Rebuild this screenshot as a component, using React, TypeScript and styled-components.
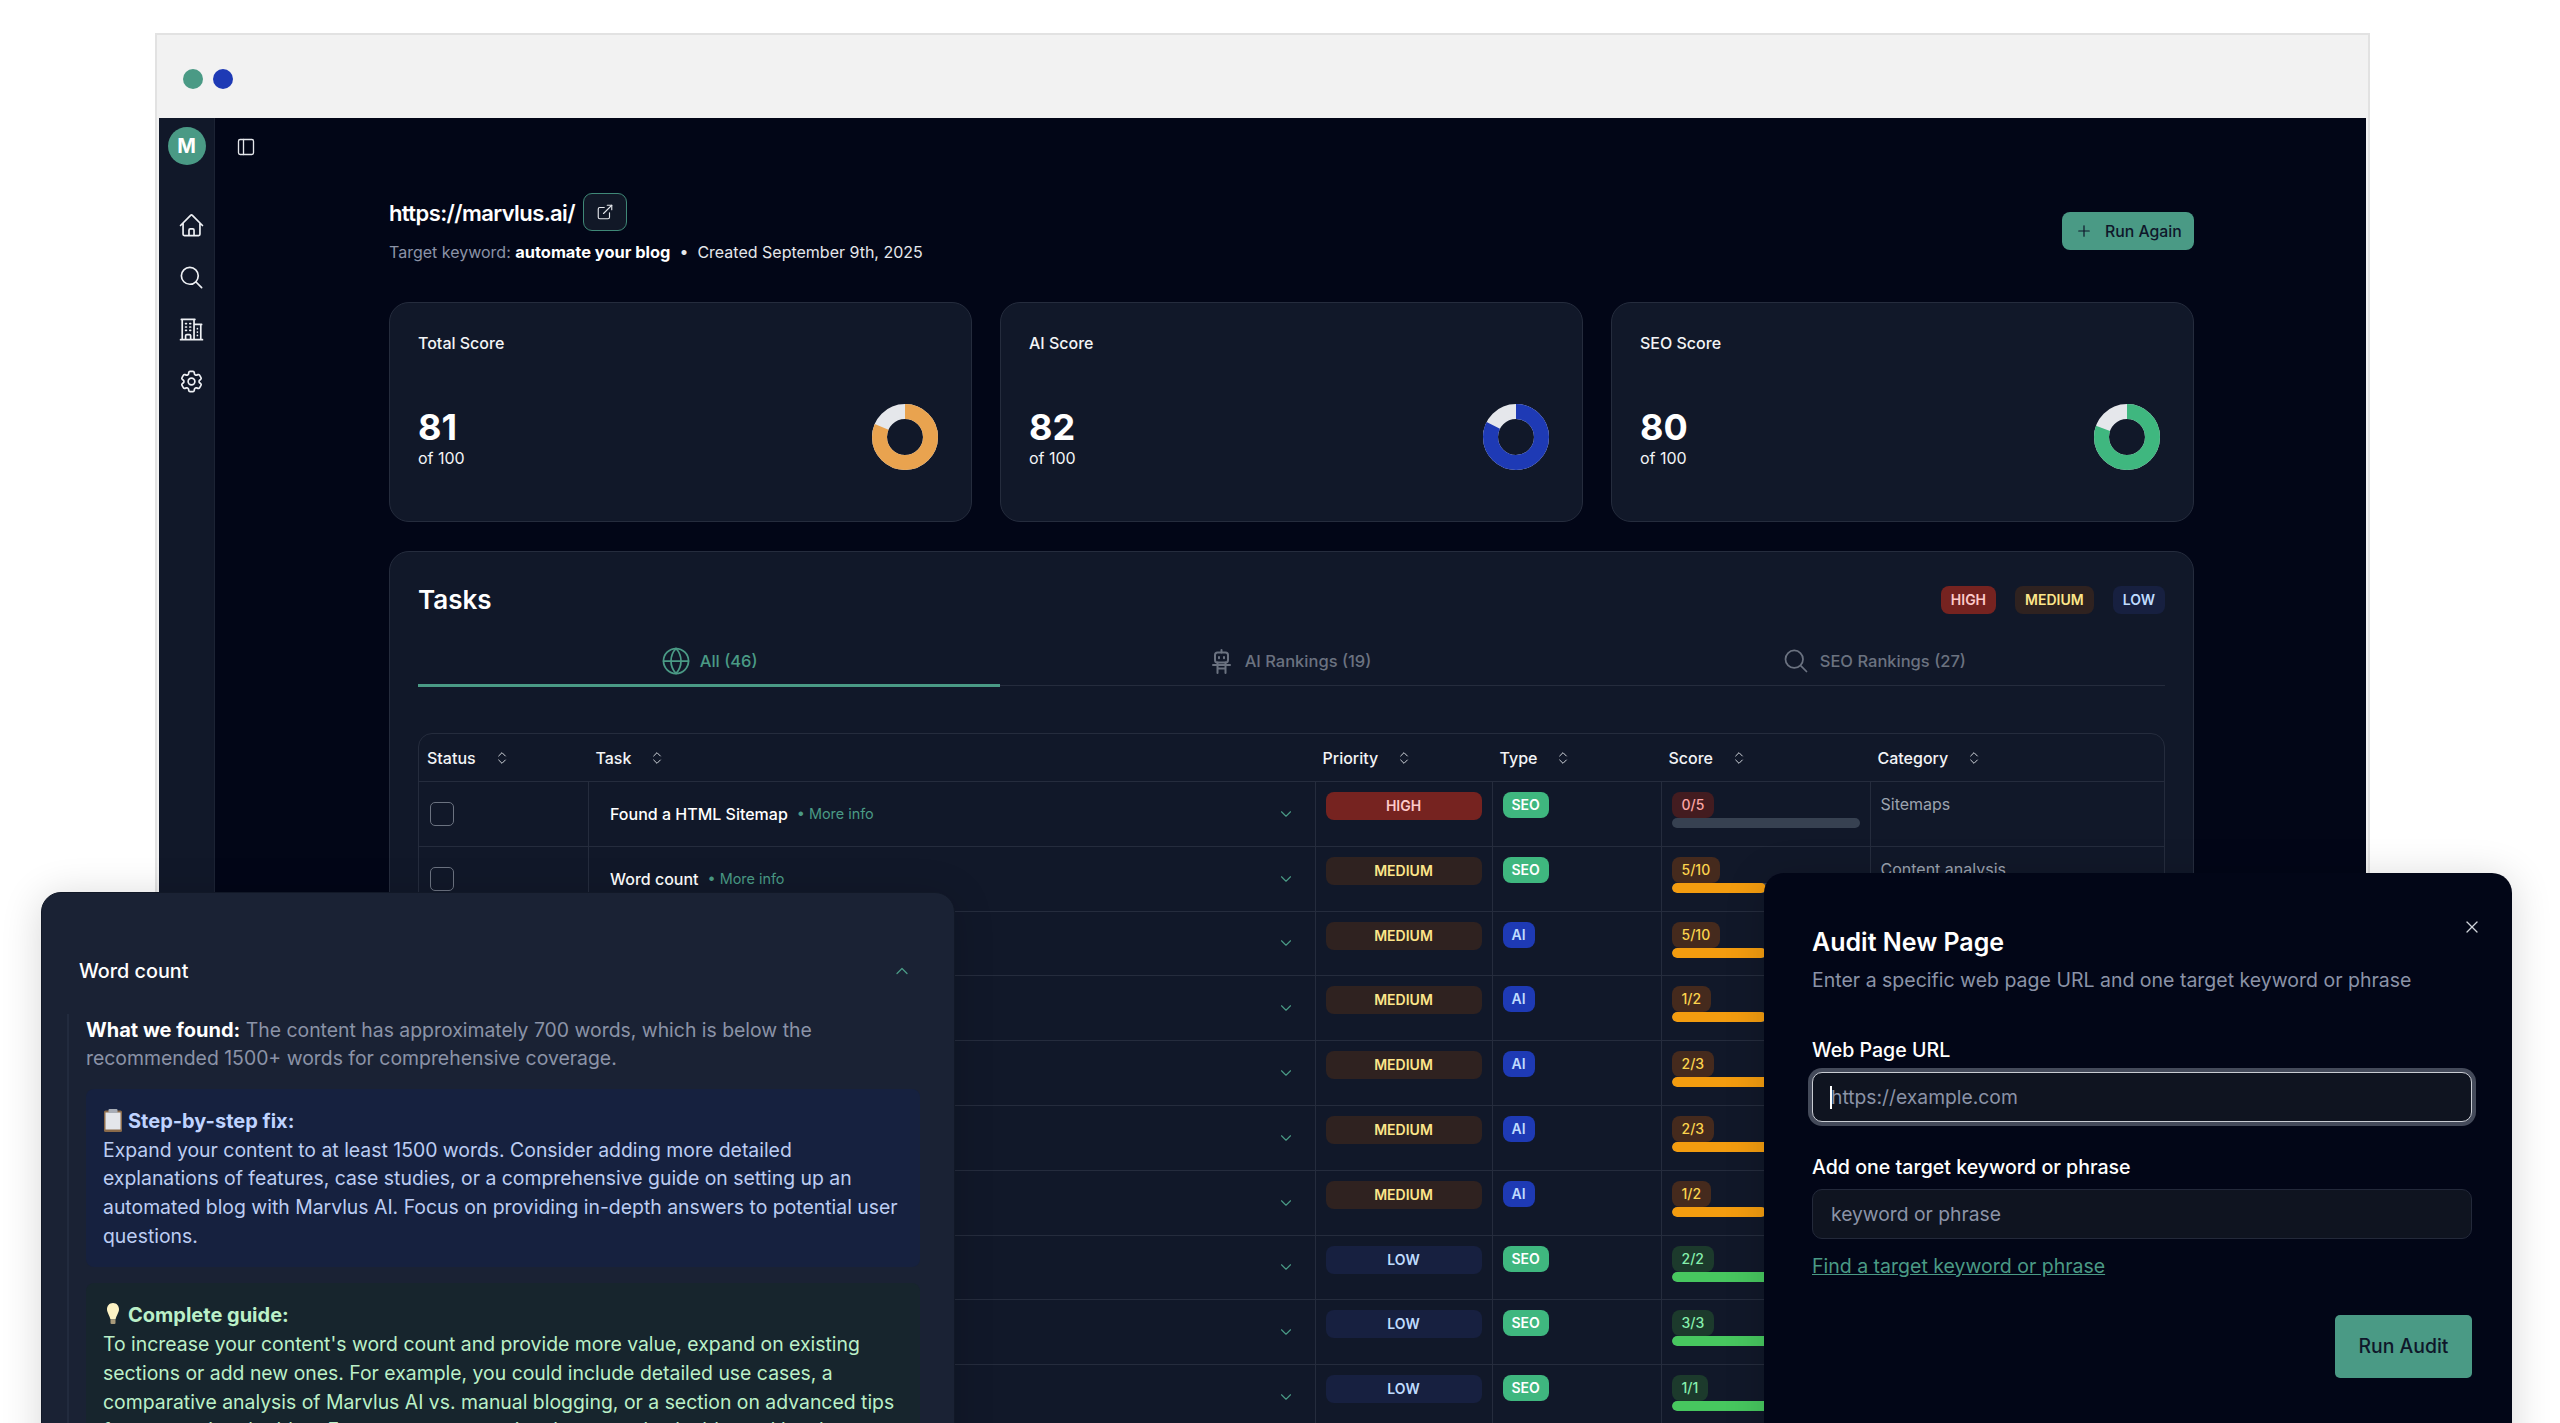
import React from "react";
import styled, { createGlobalStyle } from "styled-components";
import {
  PanelLeft,
  ExternalLink,
  Plus,
  Globe,
  ChevronsUpDown,
  ChevronDown,
  ChevronUp,
  X,
} from "lucide-react";
import {
  HiOutlineBuildingOffice2,
  HiOutlineHome,
  HiOutlineMagnifyingGlass,
  HiOutlineCog6Tooth,
} from "react-icons/hi2";

const LINE = "#252c3d";

const GlobalStyle = createGlobalStyle`
  html, body { margin: 0; padding: 0; background: #fff; }
  * { box-sizing: border-box; }
  body { font-family: Inter, "Noto Sans", sans-serif; }
`;

const Page = styled.div`
  position: relative;
  width: 2560px;
  height: 1423px;
  overflow: hidden;
  padding: 33px 190px 0 155px;
  background: #fff;
`;
const Frame = styled.div`
  display: flex;
  flex-direction: column;
  height: 100%;
  border: 2px solid #e2e2e2;
  border-bottom: 0;
  padding: 0 2px;
  background: #f2f2f2;
`;
const TitleBar = styled.div`
  display: flex;
  align-items: center;
  gap: 10.5px;
  height: 83px;
  padding: 4px 0 0 23.5px;
  flex: none;
`;
const Dot = styled.span<{ $color: string }>`
  width: 20px;
  height: 20px;
  border-radius: 50%;
  background: ${(p) => p.$color};
`;
const AppShell = styled.div`
  flex: 1;
  display: flex;
  min-height: 0;
  background: #020617;
  overflow: hidden;
`;
const Sidebar = styled.aside`
  flex: none;
  width: 56px;
  padding-top: 9px;
  display: flex;
  flex-direction: column;
  align-items: center;
  background: #111829;
  border-right: 1px solid #1c2334;
`;
const Avatar = styled.div`
  width: 38px;
  height: 38px;
  border-radius: 50%;
  background: #4a9a85;
  color: #fff;
  font-size: 20px;
  font-weight: 700;
  line-height: 39px;
  text-align: center;
`;
const SideNav = styled.nav`
  display: flex;
  flex-direction: column;
  gap: 25px;
  margin: 47px 0 0 10px;
  color: #eef0f4;
  & > svg {
    width: 27px;
    height: 27px;
    display: block;
  }
`;
const Main = styled.main`
  flex: 1;
  min-width: 0;
  display: flex;
  flex-direction: column;
`;
const TopBar = styled.div`
  flex: none;
  height: 75px;
  padding: 19px 0 0 21px;
  color: #e5e7eb;
`;
const Content = styled.div`
  flex: 1;
  min-height: 0;
  padding: 0 172px 0 174px;
`;
const Header = styled.header`
  display: flex;
  justify-content: space-between;
  align-items: center;
  height: 76px;
  margin-bottom: 33px;
`;
const HeaderLeft = styled.div`
  align-self: flex-start;
`;
const TitleRow = styled.div`
  display: flex;
  align-items: center;
  gap: 8px;
  height: 38px;
`;
const UrlTitle = styled.h1`
  margin: 0;
  padding-top: 2px;
  color: #fff;
  font-size: 22px;
  font-weight: 600;
  letter-spacing: -0.6px;
  line-height: 38px;
`;
const IconButton = styled.button`
  width: 44px;
  height: 38px;
  padding: 0;
  display: flex;
  align-items: center;
  justify-content: center;
  border: 1.5px solid #3f8877;
  border-radius: 9px;
  background: #111827;
  color: #e5e7eb;
`;
const Meta = styled.p`
  margin: 9px 0 0;
  font-size: 16px;
  line-height: 24px;
  color: #8b93a7;
  display: flex;
  align-items: center;
  white-space: pre;
  b {
    color: #fff;
    font-size: 16.4px;
    font-weight: 700;
  }
  span {
    color: #e5e7eb;
  }
`;
const RunAgain = styled.button`
  display: flex;
  align-items: center;
  gap: 12px;
  width: 132px;
  height: 38px;
  padding: 0 0 0 13px;
  border: 0;
  border-radius: 8px;
  background: #4a9a85;
  color: #0f172a;
  font-family: inherit;
  font-size: 15.8px;
  font-weight: 500;
  white-space: nowrap;
`;
const ScoreGrid = styled.section`
  display: grid;
  grid-template-columns: repeat(3, 1fr);
  gap: 28px;
  margin-bottom: 29px;
`;
const ScoreCard = styled.article`
  height: 220px;
  padding: 30px 33px 0 28px;
  background: #111829;
  border: 1.5px solid ${LINE};
  border-radius: 20px;
`;
const ScoreLabel = styled.div`
  color: #f3f4f6;
  font-size: 16px;
  font-weight: 500;
  line-height: 20px;
`;
const ScoreBody = styled.div`
  margin-top: 51px;
  display: flex;
  justify-content: space-between;
  align-items: center;
`;
const ScoreValue = styled.div`
  margin-top: 2px;
  color: #fff;
  font-size: 36px;
  font-weight: 700;
  line-height: 40px;
`;
const ScoreOf = styled.div`
  color: #f3f4f6;
  font-size: 16px;
  line-height: 22px;
`;
const TasksCard = styled.section`
  padding: 31px 28px 0;
  height: 1000px;
  background: #111829;
  border: 1.5px solid ${LINE};
  border-radius: 20px;
`;
const TasksHead = styled.div`
  display: flex;
  justify-content: space-between;
  align-items: center;
  height: 34px;
`;
const TasksTitle = styled.h2`
  margin: 0;
  color: #fff;
  font-size: 26px;
  font-weight: 600;
  line-height: 34px;
`;
const Legend = styled.div`
  display: flex;
  gap: 19px;
`;
const LegendChip = styled.span<{ $bg: string; $fg: string }>`
  height: 28px;
  padding: 0 10px;
  border-radius: 8px;
  background: ${(p) => p.$bg};
  color: ${(p) => p.$fg};
  font-size: 14px;
  font-weight: 600;
  line-height: 28px;
`;
const Tabs = styled.div`
  display: grid;
  grid-template-columns: repeat(3, 1fr);
  margin-top: 21.5px;
  border-bottom: 1.5px solid ${LINE};
`;
const Tab = styled.div<{ $active?: boolean; $gap: number }>`
  display: flex;
  align-items: center;
  justify-content: center;
  gap: ${(p) => p.$gap}px;
  height: 48px;
  margin-bottom: -1.5px;
  border-bottom: 3px solid ${(p) => (p.$active ? "#4a9a85" : "transparent")};
  color: ${(p) => (p.$active ? "#4a9a85" : "#6b7280")};
  font-size: 16.5px;
  font-weight: 500;
`;
const Table = styled.div`
  margin-top: 47px;
  border: 1.5px solid ${LINE};
  border-radius: 14px 14px 0 0;
`;
const COLS = "168.5px 727px 177px 169px 209px 1fr";
const HeadRow = styled.div`
  display: grid;
  grid-template-columns: ${COLS};
  height: 47px;
`;
const HeadCell = styled.div`
  display: flex;
  align-items: center;
  gap: 18px;
  padding-left: 8px;
  color: #f3f4f6;
  font-size: 16px;
  font-weight: 500;
  svg {
    color: #d1d5db;
  }
`;
const Row = styled.div`
  display: grid;
  grid-template-columns: ${COLS};
  height: 64.8px;
  border-top: 1.5px solid ${LINE};
`;
const Cell = styled.div`
  min-width: 0;
  padding: 10px 10px 0;
  border-left: 1.5px solid ${LINE};
  &:first-child {
    border-left: 0;
  }
`;
const StatusCell = styled(Cell)`
  display: flex;
  align-items: center;
  padding: 0 0 0 11px;
`;
const Box = styled.span`
  width: 24px;
  height: 24px;
  border: 1.5px solid #6b7280;
  border-radius: 5px;
`;
const TaskCell = styled(Cell)`
  display: flex;
  align-items: center;
  padding: 0 20px 0 21.5px;
  color: #fff;
  font-size: 16px;
  font-weight: 500;
`;
const MoreInfo = styled.span`
  margin-left: 9px;
  color: #4a9a85;
  font-size: 14.4px;
  font-weight: 400;
`;
const RowChevron = styled(ChevronDown)`
  margin-left: auto;
  color: #4a9a85;
`;
const PriorityPill = styled.div<{ $bg: string; $fg: string }>`
  height: 28px;
  border-radius: 8px;
  background: ${(p) => p.$bg};
  color: ${(p) => p.$fg};
  font-size: 14px;
  font-weight: 600;
  line-height: 28px;
  text-align: center;
`;
const TypeBadge = styled.span<{ $bg: string; $fg: string }>`
  display: inline-block;
  height: 26px;
  padding: 0 9px;
  border-radius: 8px;
  background: ${(p) => p.$bg};
  color: ${(p) => p.$fg};
  font-size: 14px;
  font-weight: 600;
  line-height: 26px;
`;
const ScoreBadge = styled.span<{ $bg: string; $fg: string }>`
  display: block;
  width: fit-content;
  height: 26px;
  padding: 0 10px;
  border-radius: 8px;
  background: ${(p) => p.$bg};
  color: ${(p) => p.$fg};
  font-size: 14px;
  font-weight: 500;
  line-height: 26px;
`;
const Track = styled.div`
  height: 10px;
  border-radius: 5px;
  background: #374151;
  overflow: hidden;
`;
const Fill = styled.div<{ $color: string }>`
  height: 100%;
  border-radius: 5px;
  background: ${(p) => p.$color};
`;
const Category = styled.div`
  color: #9ca3af;
  font-size: 16px;
  line-height: 24px;
`;

const DetailPanel = styled.aside`
  position: absolute;
  left: 41px;
  top: 891.5px;
  width: 914px;
  height: 600px;
  background: #1a2234;
  border: 1px solid #111827;
  border-radius: 20px;
  box-shadow: 0 4px 40px rgba(0, 0, 0, 0.16);
`;
const DetailHead = styled.div`
  display: flex;
  justify-content: space-between;
  align-items: center;
  padding: 66px 42px 0 37px;
  color: #fff;
  font-size: 19.8px;
  font-weight: 500;
  line-height: 24px;
  svg {
    color: #4a9a85;
  }
`;
const DetailBody = styled.div`
  margin: 31px 34px 0 25px;
  padding: 2px 0 0 17px;
  border-left: 2px solid #222b3e;
`;
const Found = styled.p`
  margin: 0;
  color: #8b93a7;
  font-size: 19.4px;
  line-height: 28.7px;
  b {
    color: #fff;
    font-size: 20px;
    font-weight: 700;
  }
`;
const Note = styled.div<{ $bg: string; $fg: string; $head: string }>`
  margin-top: 16px;
  padding: 18px 10px 17px 17px;
  border-radius: 8px;
  background: ${(p) => p.$bg};
  color: ${(p) => p.$fg};
  font-size: 19.4px;
  line-height: 28.7px;
  b {
    color: ${(p) => p.$head};
    font-size: 20px;
    font-weight: 700;
  }
  svg {
    vertical-align: -4px;
    margin-right: 5px;
  }
`;
const Modal = styled.aside`
  position: absolute;
  left: 1764px;
  top: 872.5px;
  width: 748px;
  height: 620px;
  padding: 53px 40px 0 48px;
  display: flex;
  flex-direction: column;
  background: #020617;
  border-radius: 20px;
  box-shadow: 0 4px 40px rgba(0, 0, 0, 0.16);
`;
const CloseButton = styled.button`
  position: absolute;
  top: 44px;
  right: 30px;
  padding: 0;
  border: 0;
  background: none;
  color: #d1d5db;
  display: flex;
`;
const ModalTitle = styled.h2`
  margin: 0;
  color: #fff;
  font-size: 25px;
  font-weight: 600;
  line-height: 32px;
`;
const ModalSub = styled.p`
  margin: 8px 0 0;
  color: #8b93a7;
  font-size: 19.5px;
  line-height: 28px;
`;
const FieldLabel = styled.label<{ $top: number }>`
  margin-top: ${(p) => p.$top}px;
  color: #fff;
  font-size: 19.6px;
  font-weight: 500;
  line-height: 24px;
`;
const InputWrap = styled.div`
  position: relative;
  margin-top: 10px;
`;
const TextInput = styled.input<{ $focus?: boolean }>`
  display: block;
  width: 100%;
  height: 50px;
  padding: 0 18px;
  border-radius: 10px;
  background: #0f1420;
  font-family: inherit;
  font-size: 19.3px;
  color: #fff;
  border: ${(p) => (p.$focus ? "1.5px solid #c9ccd3" : "1.5px solid #23293a")};
  box-shadow: ${(p) => (p.$focus ? "0 0 0 4px #444a5a" : "none")};
  outline: none;
  &::placeholder {
    color: #8b93a7;
    opacity: 1;
  }
`;
const Caret = styled.span`
  position: absolute;
  left: 18px;
  top: 14px;
  width: 1.5px;
  height: 23px;
  background: #fff;
`;
const KeywordLink = styled.a`
  margin-top: 15px;
  color: #4a9a85;
  font-size: 19.5px;
  line-height: 24px;
  text-decoration: underline;
`;
const RunAudit = styled.button`
  align-self: flex-end;
  margin-top: 37px;
  width: 137px;
  height: 63px;
  border: 0;
  border-radius: 5px;
  background: #4a9a85;
  color: #0f172a;
  font-family: inherit;
  font-size: 19.4px;
  font-weight: 500;
`;

const DonutSvg = styled.svg`
  display: block;
  flex: none;
`;

function Donut({ value, color }: { value: number; color: string }) {
  const r = 25.5;
  const c = 2 * Math.PI * r;
  return (
    <DonutSvg width="66" height="66" viewBox="0 0 66 66">
      <circle cx="33" cy="33" r={r} fill="none" stroke="#e5e7eb" strokeWidth="15" />
      <circle
        cx="33"
        cy="33"
        r={r}
        fill="none"
        stroke={color}
        strokeWidth="15"
        strokeDasharray={`${(c * value) / 100} ${c}`}
        transform="rotate(-90 33 33)"
      />
    </DonutSvg>
  );
}

function RobotIcon() {
  return (
    <svg width="19" height="25" viewBox="0 0 19 25" fill="none" stroke="currentColor" strokeWidth="2" strokeLinecap="round" strokeLinejoin="round">
      <path d="M9.500 1v2.500" />
      <rect x="3" y="3.500" width="13" height="10" rx="2.500" />
      <path d="M7 8v1.200M12 8v1.200" />
      <path d="M1 16h17" />
      <path d="M5.500 13.500V24M13.500 13.500V24M5.500 19.500h8" />
    </svg>
  );
}

function ClipboardIcon() {
  return (
    <svg width="20" height="23" viewBox="0 0 20 23">
      <rect x="1" y="1.500" width="18" height="21.500" rx="1.500" fill="#8a6a4a" />
      <rect x="2.500" y="3.500" width="15" height="17" fill="#e4e6ea" />
      <rect x="5.500" y="0" width="9" height="4" rx="1" fill="#a8adb6" />
    </svg>
  );
}

function BulbIcon() {
  return (
    <svg width="20" height="23" viewBox="0 0 20 23">
      <path d="M10 0C6.200 0 4 3 4 6.200c0 3.300 2.200 5.200 3.500 10.300h5C13.800 11.400 16 9.500 16 6.200 16 3 13.800 0 10 0z" fill="#fdf3c4" />
      <rect x="7.500" y="16.500" width="5" height="4.500" rx="1" fill="#a89a7a" />
    </svg>
  );
}

const PRIORITY = {
  HIGH: { bg: "#762320", fg: "#fecaca" },
  MEDIUM: { bg: "#2f2220", fg: "#fde68a" },
  LOW: { bg: "#172040", fg: "#bfdbfe" },
};
const TYPE = {
  SEO: { bg: "#3fb77f", fg: "#ffffff" },
  AI: { bg: "#1e3ab5", fg: "#bfdbfe" },
};
const SCORE = {
  red: { bg: "#431c20", fg: "#fca5a5", bar: "#374151" },
  amber: { bg: "#452a1d", fg: "#fcd34d", bar: "#f39c0f" },
  green: { bg: "#1c3a2c", fg: "#86efac", bar: "#47c75f" },
};

type RowData = {
  task?: string;
  priority: keyof typeof PRIORITY;
  type: keyof typeof TYPE;
  got: number;
  of: number;
  category?: string;
};

const rows: RowData[] = [
  { task: "Found a HTML Sitemap", priority: "HIGH", type: "SEO", got: 0, of: 5, category: "Sitemaps" },
  { task: "Word count", priority: "MEDIUM", type: "SEO", got: 5, of: 10, category: "Content analysis" },
  { priority: "MEDIUM", type: "AI", got: 5, of: 10 },
  { priority: "MEDIUM", type: "AI", got: 1, of: 2 },
  { priority: "MEDIUM", type: "AI", got: 2, of: 3 },
  { priority: "MEDIUM", type: "AI", got: 2, of: 3 },
  { priority: "MEDIUM", type: "AI", got: 1, of: 2 },
  { priority: "LOW", type: "SEO", got: 2, of: 2 },
  { priority: "LOW", type: "SEO", got: 3, of: 3 },
  { priority: "LOW", type: "SEO", got: 1, of: 1 },
];

const scores = [
  { label: "Total Score", value: 81, color: "#e9a34f" },
  { label: "AI Score", value: 82, color: "#1e3ab5" },
  { label: "SEO Score", value: 80, color: "#3fb77f" },
];

const columns = ["Status", "Task", "Priority", "Type", "Score", "Category"];

export default function App() {
  return (
    <>
      <GlobalStyle />
      <Page>
        <Frame>
          <TitleBar>
            <Dot $color="#4a9a85" />
            <Dot $color="#1e3ab5" />
          </TitleBar>
          <AppShell>
            <Sidebar>
              <Avatar>M</Avatar>
              <SideNav>
                <HiOutlineHome />
                <HiOutlineMagnifyingGlass />
                <HiOutlineBuildingOffice2 />
                <HiOutlineCog6Tooth />
              </SideNav>
            </Sidebar>
            <Main>
              <TopBar>
                <PanelLeft size={20} strokeWidth={1.6} />
              </TopBar>
              <Content>
                <Header>
                  <HeaderLeft>
                    <TitleRow>
                      <UrlTitle>https://marvlus.ai/</UrlTitle>
                      <IconButton>
                        <ExternalLink size={18} strokeWidth={1.5} />
                      </IconButton>
                    </TitleRow>
                    <Meta>
                      Target keyword: <b>automate your blog</b>
                      <span>  •  Created September 9th, 2025</span>
                    </Meta>
                  </HeaderLeft>
                  <RunAgain>
                    <Plus size={18} strokeWidth={1.6} />
                    Run Again
                  </RunAgain>
                </Header>
                <ScoreGrid>
                  {scores.map((s) => (
                    <ScoreCard key={s.label}>
                      <ScoreLabel>{s.label}</ScoreLabel>
                      <ScoreBody>
                        <div>
                          <ScoreValue>{s.value}</ScoreValue>
                          <ScoreOf>of 100</ScoreOf>
                        </div>
                        <Donut value={s.value} color={s.color} />
                      </ScoreBody>
                    </ScoreCard>
                  ))}
                </ScoreGrid>
                <TasksCard>
                  <TasksHead>
                    <TasksTitle>Tasks</TasksTitle>
                    <Legend>
                      {(["HIGH", "MEDIUM", "LOW"] as const).map((k) => (
                        <LegendChip key={k} $bg={PRIORITY[k].bg} $fg={PRIORITY[k].fg}>
                          {k}
                        </LegendChip>
                      ))}
                    </Legend>
                  </TasksHead>
                  <Tabs>
                    <Tab $active $gap={9}>
                      <Globe size={30} strokeWidth={1.4} />
                      All (46)
                    </Tab>
                    <Tab $gap={14}>
                      <RobotIcon />
                      AI Rankings (19)
                    </Tab>
                    <Tab $gap={10}>
                      <HiOutlineMagnifyingGlass size={28} />
                      SEO Rankings (27)
                    </Tab>
                  </Tabs>
                  <Table>
                    <HeadRow>
                      {columns.map((c) => (
                        <HeadCell key={c}>
                          {c}
                          <ChevronsUpDown size={16} strokeWidth={1.5} />
                        </HeadCell>
                      ))}
                    </HeadRow>
                    {rows.map((r, i) => {
                      const tone = r.got === 0 ? SCORE.red : r.got === r.of ? SCORE.green : SCORE.amber;
                      return (
                        <Row key={i}>
                          <StatusCell>
                            <Box />
                          </StatusCell>
                          <TaskCell>
                            {r.task}
                            {r.task && <MoreInfo>• More info</MoreInfo>}
                            <RowChevron size={18} strokeWidth={1.5} />
                          </TaskCell>
                          <Cell>
                            <PriorityPill $bg={PRIORITY[r.priority].bg} $fg={PRIORITY[r.priority].fg}>
                              {r.priority}
                            </PriorityPill>
                          </Cell>
                          <Cell>
                            <TypeBadge $bg={TYPE[r.type].bg} $fg={TYPE[r.type].fg}>
                              {r.type}
                            </TypeBadge>
                          </Cell>
                          <Cell>
                            <ScoreBadge $bg={tone.bg} $fg={tone.fg}>
                              {r.got}/{r.of}
                            </ScoreBadge>
                            <Track>
                              <Fill $color={tone.bar} style={{ width: `${(r.got / r.of) * 100}%` }} />
                            </Track>
                          </Cell>
                          <Cell>
                            <Category>{r.category}</Category>
                          </Cell>
                        </Row>
                      );
                    })}
                  </Table>
                </TasksCard>
              </Content>
            </Main>
          </AppShell>
        </Frame>

        <DetailPanel>
          <DetailHead>
            Word count
            <ChevronUp size={20} strokeWidth={1.5} />
          </DetailHead>
          <DetailBody>
            <Found>
              <b>What we found:</b> The content has approximately 700 words, which is below the recommended 1500+ words for comprehensive coverage.
            </Found>
            <Note $bg="#16213f" $fg="#bccdf3" $head="#bfd3ff">
              <ClipboardIcon />
              <b>Step-by-step fix:</b>
              <br />
              Expand your content to at least 1500 words. Consider adding more detailed explanations of features, case studies, or a comprehensive guide on setting up an automated blog with Marvlus AI. Focus on providing in-depth answers to potential user questions.
            </Note>
            <Note $bg="#17252d" $fg="#bbf0c8" $head="#bbf0c8">
              <BulbIcon />
              <b>Complete guide:</b>
              <br />
              To increase your content's word count and provide more value, expand on existing sections or add new ones. For example, you could include detailed use cases, a comparative analysis of Marvlus AI vs. manual blogging, or a section on advanced tips for automating the blog. Ensure new content is relevant and valuable, and has key insights. To
            </Note>
          </DetailBody>
        </DetailPanel>

        <Modal>
          <CloseButton>
            <X size={20} strokeWidth={1.5} />
          </CloseButton>
          <ModalTitle>Audit New Page</ModalTitle>
          <ModalSub>Enter a specific web page URL and one target keyword or phrase</ModalSub>
          <FieldLabel $top={44}>Web Page URL</FieldLabel>
          <InputWrap>
            <TextInput $focus placeholder="https://example.com" readOnly />
            <Caret />
          </InputWrap>
          <FieldLabel $top={33}>Add one target keyword or phrase</FieldLabel>
          <InputWrap>
            <TextInput placeholder="keyword or phrase" readOnly />
          </InputWrap>
          <KeywordLink href="#">Find a target keyword or phrase</KeywordLink>
          <RunAudit>Run Audit</RunAudit>
        </Modal>
      </Page>
    </>
  );
}
